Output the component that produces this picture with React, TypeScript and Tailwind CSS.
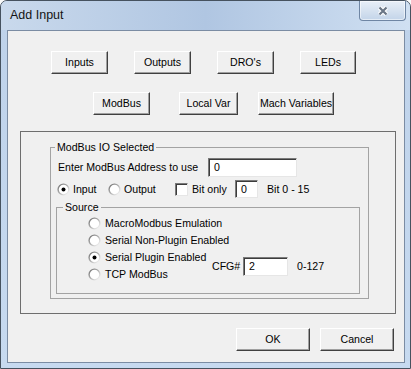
import React from "react";

function Radio({ checked }: { checked?: boolean }) {
  return (
    <svg width="13" height="13" viewBox="0 0 13 13" className="shrink-0">
      <defs>
        <linearGradient id="radioRing" x1="0" y1="0" x2="1" y2="1">
          <stop offset="0" stopColor="#6f6f6f" />
          <stop offset="0.5" stopColor="#b4b4b4" />
          <stop offset="1" stopColor="#ffffff" />
        </linearGradient>
      </defs>
      <circle cx="6.5" cy="6.5" r="5.4" fill="#ffffff" stroke="url(#radioRing)" strokeWidth="1.4" />
      {checked && <circle cx="6.5" cy="6.5" r="2" fill="#000000" />}
    </svg>
  );
}

function Btn({ label, w }: { label: string; w: string }) {
  return (
    <button
      className={`h-[23px] ${w} shrink-0 bg-[#f0f0f0] border border-t-white border-l-white border-b-[#404040] border-r-[#404040] shadow-[inset_-1px_-1px_0_#a0a0a0] text-[10.6px] leading-none text-black`}
    >
      {label}
    </button>
  );
}

function Field({ value, w, h }: { value: string; w: string; h: string }) {
  return (
    <div
      className={`${w} ${h} shrink-0 bg-white border border-t-[#7a7a7a] border-l-[#7a7a7a] border-b-[#e6e6e6] border-r-[#e6e6e6] shadow-[inset_1px_1px_0_#3c3c3c] flex items-center pl-[5px] text-[10.6px]`}
    >
      {value}
    </div>
  );
}

function SourceRow({ label, checked }: { label: string; checked?: boolean }) {
  return (
    <div className="h-[17px] flex items-center">
      <Radio checked={checked} />
      <span className="ml-[4px] whitespace-nowrap">{label}</span>
    </div>
  );
}

export default function App() {
  return (
    <div className="w-[411px] h-[369px] bg-[#fafafa] font-['Liberation_Sans',Arial,sans-serif] text-black">
      <div className="w-full h-full flex flex-col rounded-t-[7px] border border-[#46525f] bg-gradient-to-b from-[#bed2ea] to-[#c7daf0]">
        {/* title bar */}
        <div className="h-[29px] shrink-0 relative flex items-center pl-[9px] rounded-t-[6px] bg-gradient-to-r from-[#c9d9ec] via-[#b0c6e2] to-[#d0e0f2]">
          <span className="text-[12.5px] text-[#141414] -mt-[1px]">Add Input</span>
          <div className="absolute top-0 right-[4px] w-[47px] h-[20px] rounded-b-[4px] border border-t-0 border-[#6f86a4] bg-gradient-to-b from-[#e8eff8] via-[#d6e2f0] to-[#c3d4e9] shadow-[inset_0_0_0_1px_rgba(255,255,255,0.55)] flex items-center justify-center">
            <svg width="16" height="12" viewBox="0 0 16 12">
              <path d="M4.5 2.5 L11.5 9.5 M11.5 2.5 L4.5 9.5" stroke="#ffffff" strokeWidth="4.4" />
              <path d="M4.5 2.5 L11.5 9.5 M11.5 2.5 L4.5 9.5" stroke="#6a7686" strokeWidth="2.2" />
            </svg>
          </div>
        </div>

        {/* client */}
        <div className="flex-1 ml-[6px] mr-[5px] mb-[5px] border border-[#7b8ca3] bg-[#f0f0f0] flex flex-col text-[10.6px] leading-[13px]">
          <div className="flex pt-[20px] pl-[43px] gap-[26px]">
            <Btn label="Inputs" w="w-[57px]" />
            <Btn label="Outputs" w="w-[57px]" />
            <Btn label="DRO's" w="w-[57px]" />
            <Btn label="LEDs" w="w-[56px]" />
          </div>
          <div className="flex mt-[18px] pl-[85px]">
            <Btn label="ModBus" w="w-[57px]" />
            <div className="ml-[29px]">
              <Btn label="Local Var" w="w-[59px]" />
            </div>
            <div className="ml-[20px]">
              <Btn label="Mach Variables" w="w-[76px]" />
            </div>
          </div>

          {/* main panel */}
          <div className="ml-[12px] mt-[16px] w-[376px] h-[183px] border border-[#6e6e6e] flex flex-col">
            <div className="relative ml-[29px] mt-[15px] w-[319px] h-[152px] border border-[#a3a3a3] flex flex-col">
              <span className="absolute left-[4px] top-[-7px] px-[2px] bg-[#f0f0f0] leading-[13px]">ModBus IO Selected</span>

              <div className="flex items-center mt-[10px] pl-[7px] h-[19px]">
                <span className="w-[150px] whitespace-nowrap">Enter ModBus Address to use</span>
                <Field value="0" w="w-[89px]" h="h-[19px]" />
              </div>

              <div className="flex items-center mt-[3px] pl-[6px] h-[18px]">
                <div className="w-[51px] flex items-center">
                  <Radio checked />
                  <span className="ml-[3px]">Input</span>
                </div>
                <div className="w-[67px] flex items-center">
                  <Radio />
                  <span className="ml-[3px]">Output</span>
                </div>
                <div className="w-[60px] flex items-center">
                  <div className="w-[13px] h-[13px] bg-white border border-t-[#7a7a7a] border-l-[#7a7a7a] border-b-[#e6e6e6] border-r-[#e6e6e6] shadow-[inset_1px_1px_0_#3c3c3c]" />
                  <span className="ml-[4px] whitespace-nowrap">Bit only</span>
                </div>
                <Field value="0" w="w-[23px]" h="h-[18px]" />
                <span className="ml-[9px] whitespace-nowrap">Bit 0 - 15</span>
              </div>

              {/* source group */}
              <div className="relative ml-[5px] mt-[9px] w-[304px] h-[87px] border border-[#a3a3a3]">
                <span className="absolute left-[6px] top-[-7px] px-[2px] bg-[#f0f0f0] leading-[13px]">Source</span>
                <div className="flex flex-col pl-[31px] pt-[7px]">
                  <SourceRow label="MacroModbus Emulation" />
                  <SourceRow label="Serial Non-Plugin Enabled" />
                  <div className="flex items-center">
                    <div className="w-[124px] flex flex-col">
                      <SourceRow label="Serial Plugin Enabled" checked />
                      <SourceRow label="TCP ModBus" />
                    </div>
                    <span className="w-[31px]">CFG#</span>
                    <Field value="2" w="w-[45px]" h="h-[19px]" />
                    <span className="ml-[9px]">0-127</span>
                  </div>
                </div>
              </div>
            </div>
          </div>

          <div className="flex mt-[14px] pl-[228px] gap-[10px]">
            <Btn label="OK" w="w-[74px]" />
            <Btn label="Cancel" w="w-[74px]" />
          </div>
        </div>
      </div>
    </div>
  );
}
